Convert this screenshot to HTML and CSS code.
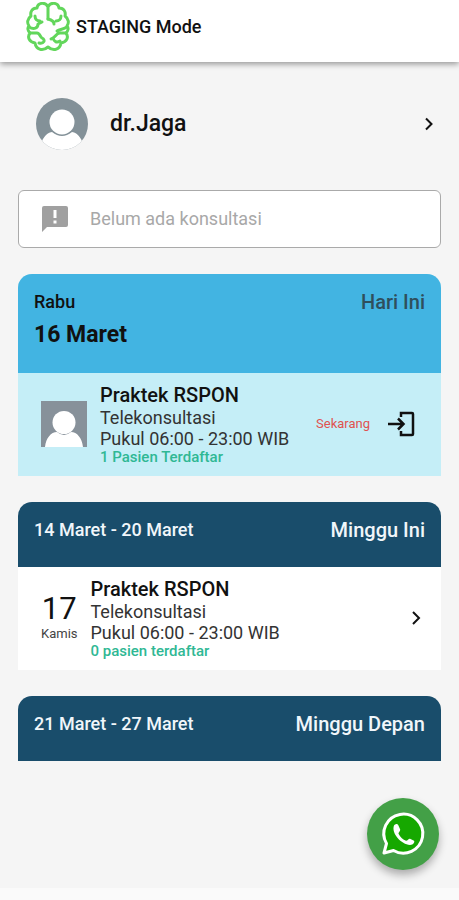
FILE: index.html
```html
<!DOCTYPE html>
<html lang="id">
<head>
<meta charset="utf-8">
<meta name="viewport" content="width=device-width, initial-scale=1">
<title>STAGING Mode</title>
<link rel="stylesheet" href="styles.css">
</head>
<body>
<header class="topbar">
  <svg class="logo" viewBox="0 0 44 50" aria-hidden="true">
    <path d="M22 17V5C20 0 12 0 11 6C6 6 4 10 5 14C1 17 1 21 3 24C1 26 2 29 4 31C1 35 3 40 9 41C10 47 16 50 22 45C28 50 34 47 35 41C41 40 43 35 40 31C42 29 43 26 41 24C43 21 43 17 39 14C40 10 38 6 33 6C32 0 24 0 22 5"/>
    <path d="M9 14C9 17 11 19 14 19M3 25C8 28 12 26 12 22L16 20M22 17C26 18 28 20 28 22M35 14C35 17 33 19 30 19M41 25C36 28 34 27 31 29M4 31H11C14 31 14 35 16 36C20 38 18 42 13 41M40 31H34C30 31 29 36 25 37M27 36C28 40 31 41 34 39"/>
  </svg>
  <h1 class="brand">STAGING Mode</h1>
</header>
<main class="content">
  <a class="profile" href="#profil">
    <svg class="avatar" viewBox="0 0 52 52" aria-hidden="true">
      <defs><clipPath id="round"><circle cx="26" cy="26" r="26"/></clipPath></defs>
      <g clip-path="url(#round)"><path fill="#839198" d="M0 0h52v52H0z"/><path fill="#fff" d="M3 52C6 40 10 35 16 34Q26 42 36 34C42 35 46 40 49 52z"/><circle cx="26" cy="24" r="12.500" fill="#fff"/></g>
    </svg>
    <span class="name">dr.Jaga</span>
    <svg class="chevron" viewBox="0 0 24 24" aria-hidden="true"><path d="M9 6.500l5.500 5.500L9 17.500"/></svg>
  </a>
  <section class="notice">
    <svg class="notice-icon" viewBox="0 0 26 26" aria-hidden="true"><path fill="#a0a0a0" fill-rule="evenodd" d="M2 0h22q2 0 2 2v17q0 2-2 2H5l-5 5V2q0-2 2-2zM11.500 4v8h3V4zM11.500 14.500v3h3v-3z"/></svg>
    <p>Belum ada konsultasi</p>
  </section>
  <section class="card today">
    <header class="card-head">
      <div><p class="day">Rabu</p><h2 class="date">16 Maret</h2></div>
      <p class="label">Hari Ini</p>
    </header>
    <a class="visit" href="#praktek-16">
      <svg class="photo" viewBox="0 0 46 46" aria-hidden="true"><path fill="#87919a" d="M0 0h46v46H0z"/><path fill="#fff" d="M4 46C5 37 10 31 16 31Q23 37 30 31C36 31 41 37 42 46z"/><circle cx="23" cy="21.500" r="11.500" fill="#fff"/></svg>
      <div class="info">
        <h3>Praktek RSPON</h3>
        <p>Telekonsultasi</p>
        <p>Pukul 06:00 - 23:00 WIB</p>
        <p class="count">1 Pasien Terdaftar</p>
      </div>
      <span class="now">Sekarang</span>
      <svg class="enter" viewBox="0 0 28 26" aria-hidden="true"><path d="M1 13h15M11 7.500l5.500 5.500L11 18.500M14 6V2h11q1 0 1 1v20q0 1-1 1H14v-4"/></svg>
    </a>
  </section>
  <section class="card">
    <header class="card-head"><h2 class="range">14 Maret - 20 Maret</h2><p class="label">Minggu Ini</p></header>
    <a class="visit" href="#praktek-17">
      <div class="when"><span class="number">17</span><span class="weekday">Kamis</span></div>
      <div class="info">
        <h3>Praktek RSPON</h3>
        <p>Telekonsultasi</p>
        <p>Pukul 06:00 - 23:00 WIB</p>
        <p class="count">0 pasien terdaftar</p>
      </div>
      <svg class="chevron" viewBox="0 0 24 24" aria-hidden="true"><path d="M9 6l6 6-6 6"/></svg>
    </a>
  </section>
  <section class="card">
    <header class="card-head"><h2 class="range">21 Maret - 27 Maret</h2><p class="label">Minggu Depan</p></header>
  </section>
</main>
<button class="chat" type="button" aria-label="WhatsApp">
  <svg viewBox="0 0 44 44" aria-hidden="true">
    <path fill="#16a800" stroke="#fff" stroke-width="3" stroke-linejoin="round" d="M3 41L5.500 31.500A19.500 19.500 0 1 1 12.500 38.500z"/>
    <path fill="#fff" d="M13 13.500C14.500 11.500 16.500 11.500 17.200 13L19.200 17.500C19.600 19 17.200 20.500 17.500 21.800C19.500 25.500 22 27.500 25 28.800C26.500 29.200 27.500 26.500 29 26.800L33 28.800C34 30 32.500 33 29 33C20.500 32.500 10 21.500 13 13.500z"/>
  </svg>
</button>
</body>
</html>
```
FILE: styles.css
```css
* { box-sizing: border-box; }
body {
  margin: 0;
  min-height: 100vh;
  background: #f5f5f5;
  border-bottom: 12px solid #fafafa;
  color: #111;
  font-family: Roboto, "Liberation Sans", sans-serif;
}
h1, h2, h3, p { margin: 0; font-weight: 500; }
a { color: inherit; text-decoration: none; }
svg { flex: none; display: block; }

.topbar {
  display: flex;
  align-items: center;
  gap: 6px;
  padding: 2px 26px 10px;
  background: #fff;
  box-shadow: 0 2px 6px rgba(0, 0, 0, .4);
}
.logo {
  width: 44px;
  height: 50px;
  fill: none;
  stroke: #62d65b;
  stroke-width: 3;
  stroke-linecap: round;
  stroke-linejoin: round;
}
.brand { font-size: 18px; line-height: 24px; }

.content { padding: 36px 18px 0; }
.profile {
  display: flex;
  align-items: center;
  padding: 0 0 0 18px;
  margin-bottom: 40px;
}
.avatar { width: 52px; height: 52px; }
.name { flex: 1; margin-left: 22px; font-size: 23px; line-height: 28px; font-weight: 500; }
.chevron {
  width: 24px;
  height: 24px;
  fill: none;
  stroke: #111;
  stroke-width: 2;
}

.notice {
  display: flex;
  align-items: center;
  gap: 22px;
  min-height: 58px;
  padding: 0 23px;
  margin-bottom: 26px;
  background: #fff;
  border: 1px solid #aaa;
  border-radius: 6px;
  color: #a8a8a8;
  font-size: 18px;
  line-height: 24px;
}
.notice p { font-weight: 400; }
.notice-icon { width: 26px; height: 26px; }

.card {
  margin-bottom: 26px;
  background: #fff;
  border-radius: 14px 14px 0 0;
  overflow: hidden;
}
.card-head {
  display: flex;
  justify-content: space-between;
  padding: 16px 16px 25px;
  background: #194d6b;
  color: #f0f6fa;
}
.range { font-size: 18px; line-height: 24px; }
.label { font-size: 20px; line-height: 24px; }
.today { background: #c5eef7; }
.today .card-head { padding-bottom: 23px; background: #42b4e2; color: #111; }
.today .label { color: #2f4f5c; }
.day { font-size: 18px; line-height: 24px; }
.date { margin-top: 6px; font-size: 23px; line-height: 30px; font-weight: 700; }

.visit {
  display: flex;
  align-items: center;
  padding: 10px 13px 11px 23px;
}
.photo { width: 46px; height: 46px; }
.info { flex: 1; margin-left: 13px; }
.info h3 { font-size: 20px; line-height: 24px; }
.info p { color: #333; font-size: 18px; line-height: 21px; font-weight: 400; }
.info .count { color: #2fb894; font-size: 15px; line-height: 16px; font-weight: 500; }
.now { color: #e0524f; font-size: 13px; line-height: 16px; margin-right: 17px; }
.enter {
  width: 28px;
  height: 26px;
  margin-right: 13px;
  fill: none;
  stroke: #111;
  stroke-width: 2.5;
}
.when { display: flex; flex-direction: column; align-items: center; }
.when + .info { margin-left: 13px; }
.number { font-size: 31px; line-height: 32px; }
.weekday { color: #444; font-size: 13px; line-height: 18px; }

.chat {
  position: fixed;
  right: 20px;
  bottom: 30px;
  display: grid;
  place-items: center;
  width: 72px;
  height: 72px;
  padding: 0;
  border: 0;
  border-radius: 50%;
  background: #43a047;
  box-shadow: 0 5px 9px rgba(0, 0, 0, .3);
}
.chat svg { width: 44px; height: 44px; overflow: visible; }
```
